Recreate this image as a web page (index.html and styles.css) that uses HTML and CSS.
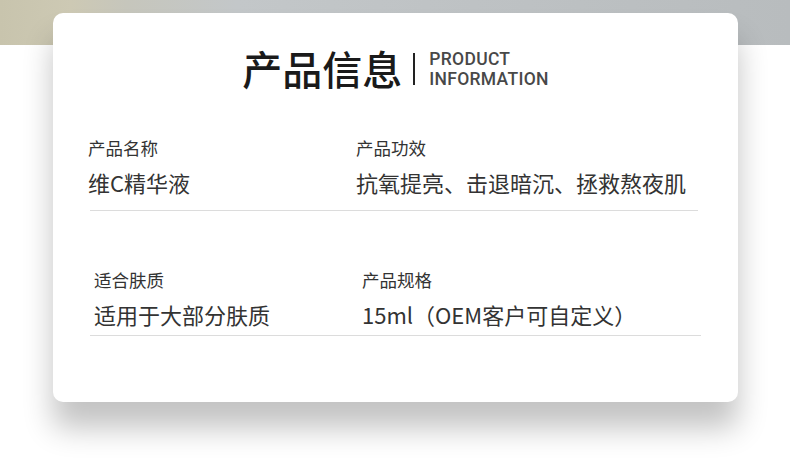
FILE: index.html
```html
<!DOCTYPE html>
<html lang="zh">
<head>
<meta charset="utf-8">
<title>产品信息</title>
<link rel="stylesheet" href="styles.css">
</head>
<body>
<div class="card">
  <div class="heading">
    <h1 class="title">产品信息</h1>
    <span class="divider"></span>
    <div class="en">PRODUCT<br>INFORMATION</div>
  </div>
  <div class="row row-one">
    <div class="cell">
      <div class="label">产品名称</div>
      <div class="value">维C精华液</div>
    </div>
    <div class="cell">
      <div class="label">产品功效</div>
      <div class="value">抗氧提亮、击退暗沉、拯救熬夜肌</div>
    </div>
  </div>
  <div class="row row-two">
    <div class="cell">
      <div class="label">适合肤质</div>
      <div class="value">适用于大部分肤质</div>
    </div>
    <div class="cell">
      <div class="label">产品规格</div>
      <div class="value">15ml（OEM客户可自定义）</div>
    </div>
  </div>
</div>
</body>
</html>
```

FILE: styles.css
```css
html, body {
  margin: 0;
  padding: 0;
}
body {
  width: 790px;
  height: 458px;
  overflow: hidden;
  background-color: #ffffff;
  background-image: linear-gradient(to right, #c8c4ad 0%, #cdc9b4 9%, #c6c6bc 16%, #c3c7c9 30%, #bec2c4 60%, #b8bcbe 100%);
  background-size: 100% 45px;
  background-repeat: no-repeat;
  font-family: "Noto Sans CJK SC", "Noto Sans", sans-serif;
  color: #333;
  padding-top: 13px;
  box-sizing: border-box;
}
.card {
  margin-left: 53px;
  width: 685px;
  height: 389px;
  background: #fff;
  border-radius: 10px;
  box-shadow: 0 26px 30px rgba(0, 0, 0, 0.24);
  box-sizing: border-box;
  padding-top: 33px;
}
.heading {
  display: flex;
  align-items: center;
  justify-content: center;
  height: 44px;
}
.title {
  margin: 0;
  font-size: 40px;
  line-height: 44px;
  font-weight: 500;
  color: #1a1a1a;
}
.divider {
  width: 2px;
  height: 32px;
  background: #222;
  margin: 2px 14px 0 11px;
}
.en {
  font-family: Roboto, "Liberation Sans", sans-serif;
  font-weight: 500;
  font-size: 17.5px;
  line-height: 20px;
  letter-spacing: 0.3px;
  color: #484848;
  margin-top: 2px;
}
.row {
  display: grid;
  border-bottom: 1px solid #dcdcdc;
}
.row-one {
  margin: 46px 40px 0 37px;
  grid-template-columns: 268px 1fr;
  padding-bottom: 13px;
}
.row-one .cell {
  margin-left: -2px;
}
.row-two {
  margin: 57px 37px 0 37px;
  grid-template-columns: 268px 1fr;
  padding-bottom: 6px;
}
.row-two .cell {
  margin-left: 4px;
}
.label {
  font-size: 17.5px;
  line-height: 24px;
  color: #333;
}
.value {
  margin-top: 7px;
  font-size: 22px;
  line-height: 30px;
  color: #333;
}
```
